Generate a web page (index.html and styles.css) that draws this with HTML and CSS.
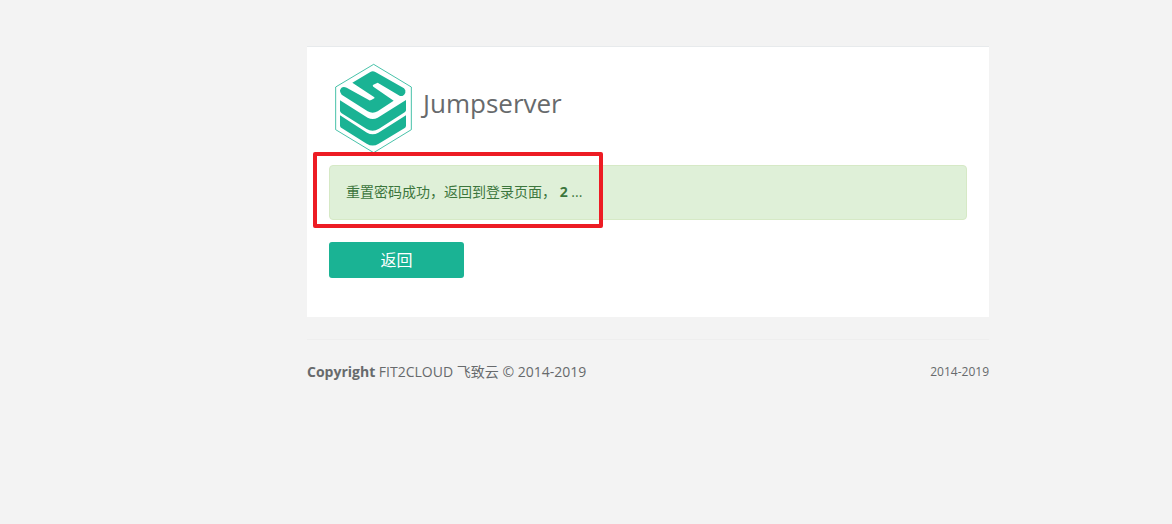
FILE: index.html
```html
<!DOCTYPE html>
<html lang="zh-CN">
<head>
<meta charset="utf-8">
<meta name="viewport" content="width=device-width, initial-scale=1">
<title>Jumpserver</title>
<link rel="stylesheet" href="styles.css">
</head>
<body>
<div class="page">
  <div class="column">
    <main class="panel">
      <header class="brand">
        <svg class="logo" viewBox="27 20 237 273" aria-hidden="true">
          <path class="logo-outline" d="M146 27 L259 95 V223 L146 292 L32 223 V95 Z"/>
          <path d="M82 82 L136 50 Q143 45 151 50 L237 99 Q243 104 241 112 Q236 124 225 122 L158 82 L145 88 Q141 91 145 94 L206 136 L158 168 Q143 176 128 168 L50 118 Q44 112 45 105 Q50 90 65 97 L133 135 Q138 136 148 129 Q150 127 147 125 Z"/>
          <path d="M45 135 L128 187 Q143 195 158 187 L243 134 V165 Q243 168 239 171 L162 220 Q143 232 125 221 L50 174 Q45 170 45 166 Z"/>
          <path d="M45 180 L126 232 Q143 242 160 232 L243 180 V211 Q243 216 238 219 L161 265 Q143 276 125 265 L51 219 Q45 216 45 211 Z"/>
        </svg>
        <h1 class="title">Jumpserver</h1>
      </header>
      <div class="alert" role="status">
        重置密码成功，返回到登录页面， <b>2</b> ...
        <span class="highlight" aria-hidden="true"></span>
      </div>
      <button class="button" type="button">返回</button>
    </main>
    <hr class="divider">
    <footer class="footer">
      <div><strong>Copyright</strong> FIT2CLOUD 飞致云 © 2014-2019</div>
      <small class="years">2014-2019</small>
    </footer>
  </div>
</div>
</body>
</html>
```
FILE: styles.css
```css
* {
  box-sizing: border-box;
}

body {
  margin: 0;
  background: #f3f3f3;
  color: #676a6c;
  font: 14px/20px "Open Sans", "Noto Sans CJK SC", sans-serif;
}

.page {
  display: grid;
  grid-template-columns: 307fr 682fr 183fr;
  padding-top: 46px;
}

.column {
  grid-column: 2;
  min-width: 0;
}

.panel {
  padding: 15px 22px 39px;
  border-top: 1px solid #e7eaec;
  background: #fff;
}

.brand {
  display: flex;
  align-items: center;
  gap: 10px;
  padding-left: 5px;
}

.logo {
  width: 79px;
  height: 91px;
  fill: #1ab394;
}

.logo-outline {
  fill: none;
  stroke: #1ab394;
  stroke-width: 3px;
  opacity: 0.8;
}

.title {
  margin: 0;
  padding-bottom: 10px;
  font-size: 26px;
  line-height: 32px;
  font-weight: 400;
}

.alert {
  position: relative;
  margin: 12px 0 22px;
  padding: 15px 16px 17px;
  border: 1px solid #d6e9c6;
  border-radius: 4px;
  background: #dff0d8;
  color: #3c763d;
  line-height: 21px;
}

.highlight {
  position: absolute;
  top: -14px;
  left: -17px;
  width: 290px;
  height: 76px;
  border: 4px solid #ed1c24;
  border-radius: 2px;
}

.button {
  display: block;
  width: 135px;
  height: 36px;
  border: 0;
  border-radius: 3px;
  background: #1ab394;
  color: #fff;
  font: inherit;
  font-size: 16px;
}

.divider {
  margin: 22px 0;
  border: 0;
  border-top: 1px solid #eee;
}

.footer {
  display: flex;
  align-items: flex-end;
  justify-content: space-between;
}

.years {
  font-size: 12px;
}
```
